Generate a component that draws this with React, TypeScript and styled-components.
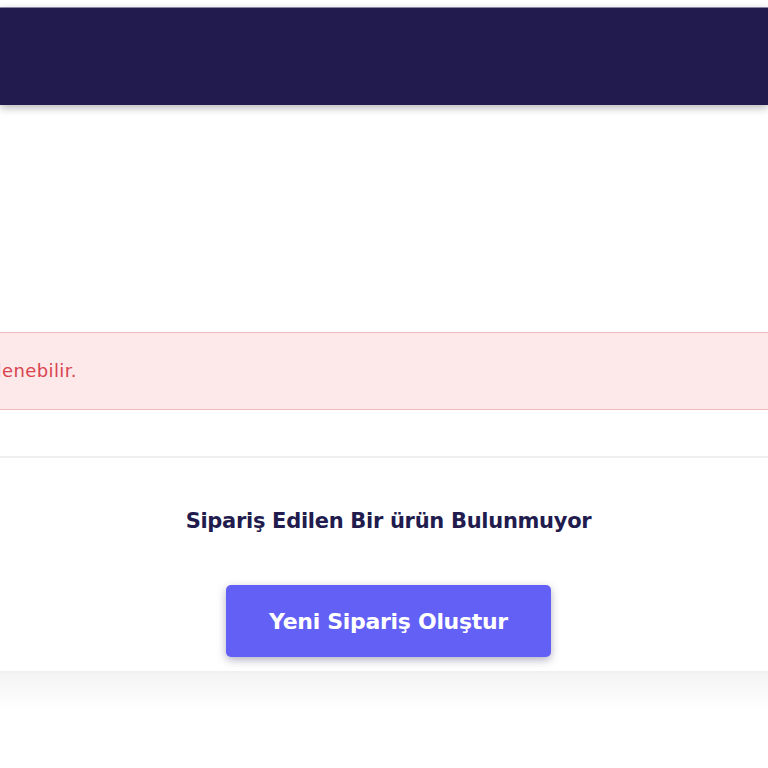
import React from "react";
import styled, { createGlobalStyle } from "styled-components";

const GlobalStyle = createGlobalStyle`
  html, body {
    margin: 0;
    padding: 0;
    background: #ffffff;
    font-family: Inter, "Noto Sans", sans-serif;
    overflow: hidden;
  }
`;

const Page = styled.div`
  width: 768px;
  height: 768px;
  display: flex;
  flex-direction: column;
  padding-top: 7px;
  box-sizing: border-box;
  overflow: hidden;
`;

const TopBar = styled.header`
  height: 98px;
  flex-shrink: 0;
  background: #221c4e;
  border-top: 1px solid #8a86a8;
  box-sizing: border-box;
  box-shadow: 0 3px 8px rgba(0, 0, 0, 0.28);
`;

const Spacer = styled.div<{ $h: number }>`
  height: ${(p) => p.$h}px;
  flex-shrink: 0;
`;

const Alert = styled.div`
  height: 78px;
  flex-shrink: 0;
  background: #fde8ea;
  border-top: 1px solid #f0b9bf;
  border-bottom: 1px solid #f0b9bf;
  box-sizing: border-box;
  display: flex;
  align-items: center;
  justify-content: flex-end;
  overflow: hidden;
  width: 768px;
`;

const AlertTrack = styled.div`
  flex-shrink: 0;
  width: 1500px;
  margin-right: 691px;
  text-align: right;
  white-space: nowrap;
  color: #d8454f;
  font-family: "DejaVu Sans", sans-serif;
  font-weight: 400;
  font-size: 18px;
  letter-spacing: 0.4px;
  padding-bottom: 2px;
`;

const Card = styled.section`
  flex-shrink: 0;
  border-top: 2px solid #f0f0f0;
  border-bottom: 2px solid #f0f0f0;
  display: flex;
  flex-direction: column;
  align-items: center;
  padding: 49px 0 14px 9px;
`;

const EmptyTitle = styled.h3`
  margin: 0;
  font-family: "DejaVu Sans", sans-serif;
  font-weight: 700;
  font-size: 21px;
  letter-spacing: -0.3px;
  color: #221c4e;
  line-height: 28px;
`;

const PrimaryButton = styled.button`
  margin-top: 50px;
  width: 325px;
  height: 72px;
  border: none;
  border-radius: 5px;
  background: #6360f6;
  color: #ffffff;
  font-family: "DejaVu Sans", sans-serif;
  font-weight: 700;
  font-size: 22px;
  letter-spacing: -0.3px;
  box-shadow: 0 3px 8px rgba(40, 30, 80, 0.35);
  cursor: pointer;
`;

const FooterFade = styled.div`
  height: 40px;
  flex-shrink: 0;
  background: linear-gradient(#f4f4f4, #ffffff);
`;

export default function App() {
  return (
    <>
      <GlobalStyle />
      <Page>
        <TopBar />
        <Spacer $h={227} />
        <Alert>
          <AlertTrack>
            Sipariş durumu, ödeme onaylandıktan sonra siparişlerim sayfasından görüntülenebilir.
          </AlertTrack>
        </Alert>
        <Spacer $h={46} />
        <Card>
          <EmptyTitle>Sipariş Edilen Bir ürün Bulunmuyor</EmptyTitle>
          <PrimaryButton>Yeni Sipariş Oluştur</PrimaryButton>
        </Card>
        <FooterFade />
      </Page>
    </>
  );
}
